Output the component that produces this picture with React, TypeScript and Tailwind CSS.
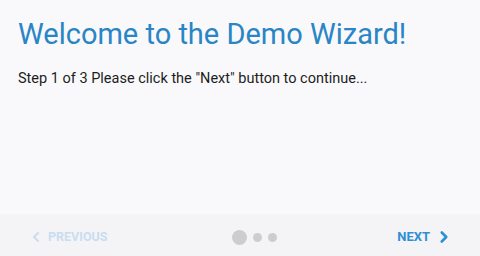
import { ChevronLeft, ChevronRight } from "lucide-react";

export default function App() {
  return (
    <div className="flex h-[256px] w-[480px] flex-col bg-[#f9f9fb] font-['Roboto',sans-serif]">
      <div className="flex-1 px-[18px] pt-[14px]">
        <h1 className="text-[29px] leading-[40px] font-normal text-[#2a85c5]">
          Welcome to the Demo Wizard!
        </h1>
        <p className="mt-[15px] text-[14.5px] leading-[20px] text-[#1d1d1d]">
          Step 1 of 3 Please click the "Next" button to continue...
        </p>
      </div>

      <div className="flex h-[42px] items-center bg-[#f4f4f7] pt-[4px]">
        <button className="ml-[28px] flex w-[180px] items-center gap-[4px] text-[12.5px] font-bold text-[#c9ddef]">
          <ChevronLeft size={16} strokeWidth={3} />
          PREVIOUS
        </button>
        <div className="ml-[24px] flex items-center gap-[6px]">
          <span className="h-[15px] w-[15px] rounded-full bg-[#cdcdcf]" />
          <span className="h-[9px] w-[9px] rounded-full bg-[#cdcdcf]" />
          <span className="h-[9px] w-[9px] rounded-full bg-[#cdcdcf]" />
        </div>
        <button className="ml-auto mr-[27px] flex items-center gap-[5px] text-[13px] font-bold text-[#2d8fd5]">
          NEXT
          <ChevronRight size={18} strokeWidth={3.5} />
        </button>
      </div>
    </div>
  );
}
